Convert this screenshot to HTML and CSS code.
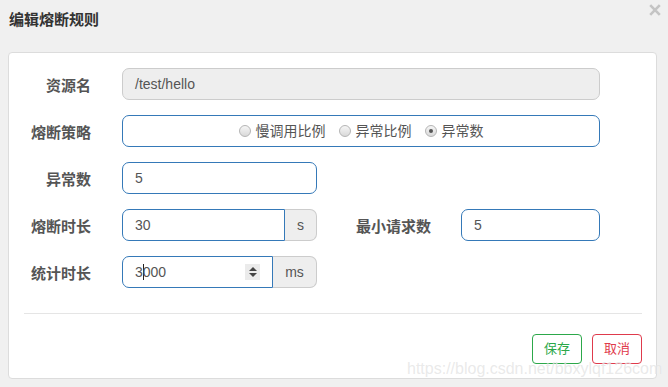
FILE: index.html
```html
<!DOCTYPE html>
<html lang="zh">
<head>
<meta charset="utf-8">
<title>编辑熔断规则</title>
<link rel="stylesheet" href="styles.css">
</head>
<body>
<div class="page">
  <div class="header">
    <h1 class="title">编辑熔断规则</h1>
    <span class="close" aria-label="close">
      <svg width="12" height="12" viewBox="0 0 12 12"><path d="M1.2 1.2 L10.8 10.8 M10.8 1.2 L1.2 10.8" stroke="#c4c4c4" stroke-width="2.6" stroke-linecap="butt"/></svg>
    </span>
  </div>
  <div class="card">
    <div class="rows">
      <div class="row">
        <label class="label">资源名</label>
        <div class="field readonly wide">/test/hello</div>
      </div>
      <div class="row">
        <label class="label">熔断策略</label>
        <div class="field focus wide radios">
          <span class="radio"><span class="dot"></span>慢调用比例</span>
          <span class="radio"><span class="dot"></span>异常比例</span>
          <span class="radio"><span class="dot checked"></span>异常数</span>
        </div>
      </div>
      <div class="row">
        <label class="label">异常数</label>
        <div class="field focus mid">5</div>
      </div>
      <div class="row">
        <label class="label">熔断时长</label>
        <div class="group">
          <div class="field focus left g1">30</div>
          <span class="addon a1">s</span>
        </div>
        <label class="label label2">最小请求数</label>
        <div class="field focus small">5</div>
      </div>
      <div class="row">
        <label class="label">统计时长</label>
        <div class="group">
          <div class="field focus left g2"><span class="val">3<span class="caret"></span>000</span><span class="spin"><span class="up"></span><span class="down"></span></span></div>
          <span class="addon a2">ms</span>
        </div>
      </div>
    </div>
    <div class="divider"></div>
    <div class="actions">
      <button class="btn save">保存</button>
      <button class="btn cancel">取消</button>
    </div>
  </div>
  <div class="watermark">https://blog.csdn.net/bbxylqf126com</div>
</div>
</body>
</html>
```

FILE: styles.css
```css
* { box-sizing: border-box; }
html, body { margin: 0; padding: 0; }
body {
  background: #f0f0f0;
  font-family: "Liberation Sans", "Noto Sans CJK SC", sans-serif;
  color: #555;
  width: 668px;
  height: 387px;
  overflow: hidden;
}
.page { position: relative; width: 668px; height: 387px; }
.header {
  height: 52px;
  display: flex;
  justify-content: space-between;
  align-items: flex-start;
  padding: 0 7px 0 9px;
}
.title {
  margin: 10px 0 0 0;
  font-size: 15px;
  line-height: 20px;
  font-weight: bold;
  color: #333;
}
.close { display: block; margin-top: 4px; width: 12px; height: 12px; }
.close svg { display: block; }
.card {
  margin: 0 11px 0 8px;
  height: 327px;
  background: #fff;
  border: 1px solid #dcdcdc;
  border-radius: 4px;
  padding: 15px 0 14px 0;
  display: flex;
  flex-direction: column;
}
.rows { display: flex; flex-direction: column; gap: 15px; }
.row { display: flex; align-items: center; height: 32px; }
.label {
  width: 82px;
  margin-right: 31px;
  text-align: right;
  font-size: 15px;
  font-weight: bold;
  color: #555;
  line-height: 20px;
  padding-top: 4px;
}
.label2 { width: 75px; margin-left: 39px; margin-right: 30px; }
.field {
  height: 32px;
  border: 1px solid #ccc;
  border-radius: 7px;
  padding: 0 12px;
  font-size: 14px;
  line-height: 30px;
  color: #555;
  background: #fff;
}
.field.readonly { background: #eee; border-color: #ccc; }
.field.focus { border-color: #3579b8; }
.wide { width: 478px; }
.mid { width: 195px; }
.small { width: 139px; }
.radios {
  display: flex;
  justify-content: center;
  align-items: center;
  gap: 13px;
  padding: 0;
}
.radio { display: flex; align-items: center; gap: 5px; font-size: 14px; color: #555; }
.dot {
  width: 12px;
  height: 12px;
  border-radius: 50%;
  border: 1px solid #b5b5b5;
  background: linear-gradient(#f6f6f6, #d9d9d9);
  position: relative;
  margin-top: -1px;
}
.dot.checked::after {
  content: "";
  position: absolute;
  left: 3px; top: 3px;
  width: 4px; height: 4px;
  border-radius: 50%;
  background: #555;
}
.group { display: flex; height: 32px; }
.field.left { border-radius: 7px 0 0 7px; }
.g1 { width: 163px; }
.g2 { width: 151px; display: flex; align-items: center; justify-content: space-between; padding-right: 12px; }
.addon {
  height: 32px;
  border: 1px solid #ccc;
  border-left: none;
  border-radius: 0 7px 7px 0;
  background: #eee;
  color: #555;
  font-size: 14px;
  line-height: 30px;
  text-align: center;
}
.a1 { width: 32px; }
.a2 { width: 44px; }
.val { display: inline-block; }
.caret {
  display: inline-block;
  width: 1px;
  height: 16px;
  background: #222;
  vertical-align: -3px;
  margin-right: -1px;
}
.spin {
  width: 15px;
  height: 16px;
  background: #ebebeb;
  display: flex;
  flex-direction: column;
  align-items: center;
  justify-content: center;
  gap: 2px;
}
.up, .down { width: 0; height: 0; border-left: 4px solid transparent; border-right: 4px solid transparent; }
.up { border-bottom: 4px solid #444; }
.down { border-top: 4px solid #444; }
.divider {
  margin: 25px 14px 0 15px;
  height: 1px;
  background: #e5e5e5;
}
.actions {
  margin: 20px 14px 0 0;
  display: flex;
  justify-content: flex-end;
  gap: 10px;
}
.btn {
  height: 30px;
  width: 50px;
  padding: 0;
  background: #fff;
  border: 1px solid;
  border-radius: 4px;
  font-family: "Liberation Sans", "Noto Sans CJK SC", sans-serif;
  font-size: 13px;
  line-height: 28px;
}
.save { border-color: #2ca84a; color: #2ca84a; }
.cancel { border-color: #df3a4c; color: #df3a4c; }
.watermark {
  position: absolute;
  left: 407px;
  top: 359px;
  font-family: "Liberation Sans", sans-serif;
  font-size: 16px;
  line-height: 20px;
  color: rgba(200, 200, 200, 0.4);
  text-shadow: 0 0 1px rgba(255,255,255,0.8);
  white-space: nowrap;
}
```
